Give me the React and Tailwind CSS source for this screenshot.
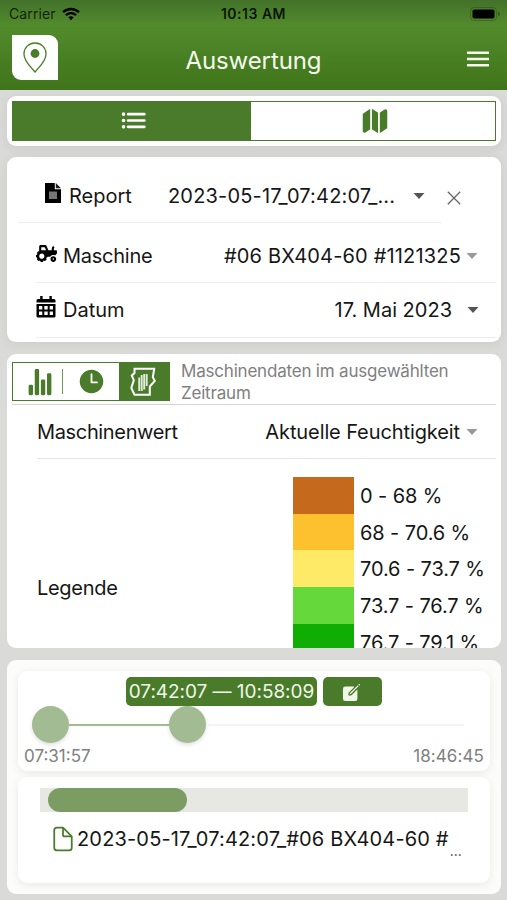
import { FaTractor } from 'react-icons/fa'
import {
  IoList,
  IoMap,
  IoStatsChart,
  IoTime,
  IoCreate,
  IoDocumentOutline,
} from 'react-icons/io5'

const LEGEND = [
  { label: '0 - 68 %', color: 'bg-[#c56a1c]' },
  { label: '68 - 70.6 %', color: 'bg-[#fdc02f]' },
  { label: '70.6 - 73.7 %', color: 'bg-[#feea66]' },
  { label: '73.7 - 76.7 %', color: 'bg-[#65d93b]' },
  { label: '76.7 - 79.1 %', color: 'bg-[#10ad05]' },
]

function Caret({ className }) {
  return (
    <svg viewBox="0 0 12 6" className={`w-3 h-1.5 shrink-0 ${className}`} fill="currentColor">
      <path d="M0.5 0h11L6 6z" />
    </svg>
  )
}

function StatusBar() {
  return (
    <div className="h-7 grid grid-cols-3 items-center pl-[9px] pr-[7px] text-black">
      <div className="flex items-center gap-1.5">
        <span className="text-[14px] leading-none tracking-[0.1px] text-black/75">Carrier</span>
        <svg viewBox="0 0 18 14" className="w-[18px] h-[14px]" fill="none" stroke="currentColor" strokeWidth="2.4">
          <path d="M1 5.2C5.6 0.9 12.4 0.9 17 5.2" />
          <path d="M3.9 8.2C6.9 5.5 11.1 5.5 14.1 8.2" />
          <path d="M6.3 10.3C7.9 9 10.1 9 11.7 10.3L9 13.2z" fill="currentColor" stroke="none" />
        </svg>
      </div>
      <span className="-ml-0.5 text-center text-[14px] leading-none tracking-[0.5px] font-semibold text-black/85 whitespace-nowrap">
        10:13 AM
      </span>
      <svg viewBox="0 0 30 14" className="w-[30px] h-[14px] justify-self-end">
        <rect x="0.5" y="0.5" width="26" height="13" rx="3.5" fill="none" stroke="#000" strokeOpacity="0.2" />
        <rect x="2.5" y="2.5" width="22" height="9" rx="1.8" fill="#000" />
        <path d="M28 5v4a2 2 0 0 0 0-4z" fill="#000" fillOpacity="0.3" />
      </svg>
    </div>
  )
}

function Header() {
  return (
    <header className="h-[90px] bg-linear-to-b from-[#42722a] via-[#528b2c] via-28% to-[#40741a]">
      <StatusBar />
      <div className="h-[62px] grid grid-cols-[60px_1fr_60px] items-start pl-3 pr-[18px]">
        <div className="mt-[7px] w-[46px] h-[45px] bg-white rounded-tr-[9px] rounded-bl-[9px] flex items-center justify-center">
          <svg viewBox="0 0 24 31" className="w-6 h-[31px]" fill="none">
            <path
              d="M12 1C5.7 1 1 5.8 1 11.8 1 18 6.5 24 12 30c5.5-6 11-12 11-18.2C23 5.8 18.3 1 12 1z"
              stroke="#4a7d27"
              strokeWidth="1.3"
            />
            <circle cx="12" cy="11.5" r="4.4" fill="#4a7d27" />
          </svg>
        </div>
        <h1 className="mt-[17px] ml-1.5 text-center text-[24px] leading-8 tracking-[-0.1px] text-[#f6faee]">
          Auswertung
        </h1>
        <svg viewBox="0 0 22 16" className="mt-[23px] w-[22px] h-4 justify-self-end" stroke="#f6faee" strokeWidth="2.4">
          <path d="M0 1.8h22M0 8h22M0 14.2h22" />
        </svg>
      </div>
    </header>
  )
}

function ViewSwitch() {
  return (
    <section className="h-[50px] rounded-[9px] bg-white p-[5px] shadow-[0_2px_12px_rgba(0,0,0,0.07)]">
      <div className="h-10 flex border border-[#4a7b2a]">
        <button className="w-[238px] bg-[#4a7b2a] text-white flex items-center justify-center pl-[3px] pb-px">
          <IoList className="w-[29px] h-[29px]" />
        </button>
        <button className="flex-1 text-[#4a7b2a] flex items-center justify-center pl-[3px] pb-px">
          <IoMap className="w-7 h-7" />
        </button>
      </div>
    </section>
  )
}

function ReportIcon() {
  return (
    <svg viewBox="0 0 16 20" className="w-4 h-5 mb-[7px] shrink-0">
      <path d="M0 0h9.800v6.200H16V20H0z" fill="#000" />
      <path d="M10.800 0L16 5.200h-5.200z" fill="#1c1c1c" />
      <rect x="4" y="8.500" width="8" height="7.500" fill="#777" />
    </svg>
  )
}

function CalendarIcon() {
  return (
    <svg viewBox="0 0 20 22" className="w-5 h-[22px] mb-1.5 shrink-0" fill="#000">
      <path d="M4.200 0h2.400v3H13.400V0h2.400v3H18a1.500 1.500 0 0 1 1.500 1.500V6.600H0.500V4.500A1.500 1.500 0 0 1 2 3h2.200z" />
      <path
        fillRule="evenodd"
        d="M0.500 8h19v12a1.500 1.500 0 0 1-1.500 1.500H2A1.500 1.500 0 0 1 0.500 20zM3 10v3.500h3.300V10zM8.300 10v3.500h3.400V10zM13.700 10v3.500H17V10zM3 15.500V19h3.300v-3.500zM8.300 15.500V19h3.400v-3.500zM13.700 15.500V19H17v-3.500z"
      />
    </svg>
  )
}

function Filters() {
  return (
    <section className="h-[185px] rounded-[9px] bg-white text-[20px] text-[#161616] whitespace-nowrap shadow-[0_2px_12px_rgba(0,0,0,0.07)]">
      <div className="flex h-[66px]">
        <div className="ml-[11px] w-[423px] border-b border-[#ececec] flex items-center pt-[13px] pl-[27px]">
          <ReportIcon />
          <span className="ml-2 w-[99px]">Report</span>
          <span className="w-[227px] tracking-[0.17px]">2023-05-17_07:42:07_...</span>
          <Caret className="ml-[18px] text-[#555]" />
        </div>
        <button className="ml-1.5 pt-[15px] text-[#666]">
          <svg viewBox="0 0 14 14" className="w-[14px] h-[14px]" fill="none" stroke="currentColor" strokeWidth="1.3">
            <path d="M0.800 0.800l12.400 12.400M13.200 0.800L0.800 13.200" />
          </svg>
        </button>
      </div>

      <div className="ml-[29px] mr-[5px] h-[60px] border-b border-[#ececec] flex items-center pt-[7px] pr-[18px]">
        <FaTractor className="w-[21px] h-[19px] mb-[5px] text-black" />
        <span className="ml-1.5 tracking-[-0.25px]">Maschine</span>
        <span className="ml-auto tracking-[0.17px]">#06 BX404-60 #1121325</span>
        <Caret className="ml-[5px] text-[#999]" />
      </div>

      <div className="ml-[29px] mr-[5px] h-[55px] border-b border-[#ececec] flex items-center pr-[17px]">
        <CalendarIcon />
        <span className="ml-[7px]">Datum</span>
        <span className="ml-auto">17. Mai 2023</span>
        <Caret className="ml-[15px] text-[#555]" />
      </div>
    </section>
  )
}

function FieldIcon() {
  return (
    <svg viewBox="0 0 26 30" className="w-[26px] h-[30px]" fill="none">
      <path
        d="M4.500 1.800H24.200L22.800 10.300L24.800 13.800L19.800 19.500V27.800H4.500L1.300 21L3.800 13.200L1.800 8.500L4.500 6z"
        stroke="#fff"
        strokeWidth="2"
      />
      <path d="M9.200 10.500V24M11.700 8V24M14.200 7V22.500M16.700 7V19" stroke="#e3ecdc" strokeWidth="1.900" />
    </svg>
  )
}

function MachineData() {
  return (
    <section className="h-[294px] rounded-[9px] bg-white overflow-hidden text-[20px] text-[#161616] whitespace-nowrap">
      <div className="ml-[5px] mr-[5px] h-[51px] pt-2 border-b border-[#d5d5d5] flex">
        <div className="w-[158px] h-[39px] border border-[#4a7b2a] text-[#4a7b2a] flex items-center shrink-0">
          <IoStatsChart className="ml-[13px] w-7 h-7" />
          <span className="ml-2 w-px h-[25px] bg-[#6f9756]" />
          <IoTime className="ml-[14px] w-[29px] h-[29px]" />
          <span className="ml-auto w-[50px] h-full bg-[#4a7b2a] flex items-center justify-center pr-0.5">
            <FieldIcon />
          </span>
        </div>
        <p className="ml-[11px] -mt-0.5 text-[17px] leading-[22px] tracking-[-0.2px] text-[#808080]">
          Maschinendaten im ausgewählten
          <br />
          Zeitraum
        </p>
      </div>
      <div className="ml-[30px] mr-[5px] h-[54px] border-b border-[#e6e6e6] flex items-center pt-px pr-[18px]">
        <span className="tracking-[-0.35px]">Maschinenwert</span>
        <span className="ml-auto tracking-[-0.1px]">Aktuelle Feuchtigkeit</span>
        <Caret className="ml-1.5 text-[#999]" />
      </div>
      <div className="flex pl-[30px] pt-[18px]">
        <span className="w-[256px] mt-[96px] tracking-[-0.3px]">Legende</span>
        <ul>
          {LEGEND.map((item) => (
            <li key={item.label} className="flex h-[36.7px] items-center">
              <span className={`w-[61px] h-full ${item.color}`} />
              <span className="ml-1.5 pt-px tracking-[-0.1px]">{item.label}</span>
            </li>
          ))}
        </ul>
      </div>
    </section>
  )
}

function TimeRange() {
  return (
    <div className="h-[100px] rounded-[9px] bg-white pt-1.5 shadow-[0_2px_9px_rgba(0,0,0,0.08)]">
      <div className="flex gap-1.5 ml-[108px] text-[#f1f7e8]">
        <span className="w-[191px] h-[29px] rounded-[5px] bg-[#4a7b2a] text-[19px] leading-[30px] tracking-[-0.05px] text-center whitespace-nowrap">
          07:42:07 — 10:58:09
        </span>
        <button className="w-[59px] h-[29px] rounded-[5px] bg-[#4a7b2a] flex items-center justify-center pt-0.5 pr-0.5">
          <IoCreate className="w-[21px] h-[21px]" />
        </button>
      </div>
      <div className="flex items-center mr-[26px] h-9 pl-[14px] pt-px">
        <span className="size-[37px] rounded-full bg-[#a2bb92] shadow-[0_2px_4px_rgba(0,0,0,0.12)] shrink-0" />
        <span className="w-[100px] h-0.5 bg-[#a2bb92]" />
        <span className="size-[37px] rounded-full bg-[#a2bb92] shadow-[0_2px_4px_rgba(0,0,0,0.12)] shrink-0" />
        <span className="flex-1 h-0.5 bg-[#f3f3f3]" />
      </div>
      <div className="flex justify-between px-1.5 mt-0.5 text-[17px] leading-6 text-[#808080]">
        <span>07:31:57</span>
        <span className="tracking-[0.1px]">18:46:45</span>
      </div>
    </div>
  )
}

function ReportItem() {
  return (
    <div className="mt-1.5 h-[106px] rounded-[9px] bg-white pt-[11px] pl-[22px] pr-[22px] shadow-[0_2px_9px_rgba(0,0,0,0.08)]">
      <div className="h-6 bg-[#e7e8e4] pl-2">
        <div className="w-[139px] h-6 rounded-full bg-[#7b9c62]" />
      </div>
      <div className="flex items-center h-[30px] mt-3 pl-[9px] whitespace-nowrap">
        <IoDocumentOutline className="w-7 h-7 text-[#4a7b2a] shrink-0" />
        <span className="text-[20px] tracking-[0.16px] text-[#161616]">2023-05-17_07:42:07_#06 BX404-60 #</span>
        <span className="ml-px mt-[22px] text-[14px] text-[#444]">...</span>
      </div>
    </div>
  )
}

export default function App() {
  return (
    <div className="w-[507px] h-[900px] overflow-hidden bg-[#dadbd8] font-['Inter','Liberation_Sans',sans-serif]">
      <Header />
      <main className="pt-1.5 pl-[7px] pr-1.5 flex flex-col">
        <ViewSwitch />
        <div className="mt-[11px]">
          <Filters />
        </div>
        <div className="mt-3">
          <MachineData />
        </div>
        <section className="mt-3 h-[234px] rounded-[9px] bg-[#fcfcfb] px-[11px] pt-[11px]">
          <TimeRange />
          <ReportItem />
        </section>
      </main>
    </div>
  )
}
